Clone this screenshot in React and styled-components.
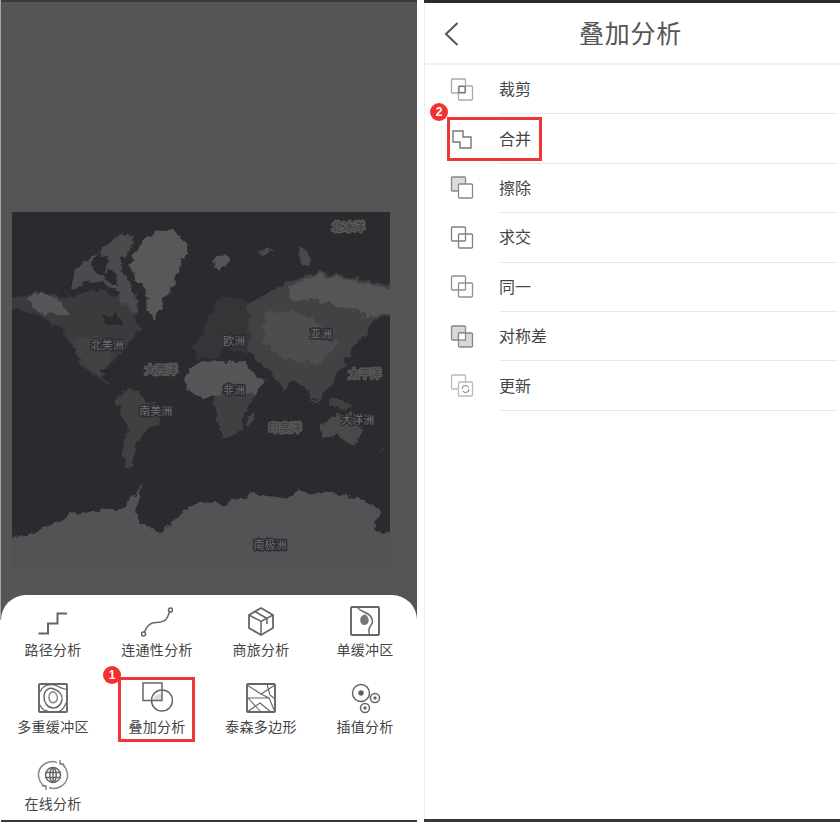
import React from "react";
import styled, { createGlobalStyle } from "styled-components";

const GlobalStyle = createGlobalStyle`
  html, body {
    margin: 0;
    padding: 0;
    background: #fff;
  }
  body {
    font-family: "Noto Sans CJK SC", "Liberation Sans", sans-serif;
  }
`;

const Page = styled.div`
  width: 840px;
  height: 822px;
  display: flex;
  gap: 7px;
  padding-left: 1px;
  box-sizing: border-box;
  overflow: hidden;
`;

const Phone = styled.div`
  width: 416px;
  height: 822px;
  flex: none;
  box-sizing: border-box;
  display: flex;
  flex-direction: column;
  background: #fff;
  border-bottom: ${(p) => p.$bar}px solid #36363a;
`;

const MapScreen = styled.div`
  flex: none;
  height: 620px;
  background: #555;
  border-top: 2px solid #39393c;
  box-shadow: -1px 0 0 #a5a5a5;
  padding: 210px 27px 0 11px;
  box-sizing: border-box;
  overflow: hidden;
`;

const MapSvg = styled.svg`
  display: block;
  width: 378px;
  height: 356px;
`;

const MapLabel = styled.text`
  font-size: 33px;
  text-anchor: middle;
  dominant-baseline: central;
  paint-order: stroke;
  stroke-width: 9px;
  stroke-linejoin: round;
  fill: ${(p) => (p.$ocean ? "#3c3c3e" : "#6f6f72")};
  stroke: ${(p) => (p.$ocean ? "#585858" : "#2c2c30")};
`;

const Sheet = styled.div`
  flex: 1;
  margin-top: -25px;
  position: relative;
  background: #fff;
  border-radius: 25px 25px 0 0;
  padding-top: 10px;
`;

const Grid = styled.div`
  display: grid;
  grid-template-columns: repeat(4, 104px);
  grid-auto-rows: 53px;
  row-gap: 24px;
`;

const Tool = styled.div`
  position: relative;
  display: flex;
  flex-direction: column;
  align-items: center;
  gap: 4px;
`;

const ToolIcon = styled.svg`
  display: block;
  width: 32px;
  height: 32px;
  fill: none;
  stroke: #666;
  stroke-width: 1.5;
`;

const ToolName = styled.span`
  font-size: 14px;
  line-height: 16px;
  letter-spacing: 0.3px;
  color: #444;
  white-space: nowrap;
`;

const Highlight = styled.div`
  position: absolute;
  box-sizing: border-box;
  border: 3px solid #f03636;
  left: ${(p) => p.$left}px;
  top: ${(p) => p.$top}px;
  width: ${(p) => p.$width}px;
  height: ${(p) => p.$height}px;
`;

const Badge = styled.div`
  position: absolute;
  left: ${(p) => p.$left}px;
  top: ${(p) => p.$top}px;
  width: 18px;
  height: 18px;
  border-radius: 50%;
  background: #f5302f;
  color: #fff;
  font-family: "Liberation Sans", sans-serif;
  font-size: 12px;
  font-weight: 700;
  line-height: 18px;
  text-align: center;
`;

const TopBar = styled.div`
  flex: none;
  height: 3px;
  background: #2b2b30;
`;

const Header = styled.div`
  height: 60px;
  padding-bottom: 2px;
  box-sizing: border-box;
  display: flex;
  align-items: center;
  justify-content: center;
  position: relative;
`;

const HeaderRule = styled.div`
  height: 2px;
  background: #efefef;
`;

const BackIcon = styled.svg`
  position: absolute;
  left: 18px;
  top: 18px;
  width: 18px;
  height: 26px;
  fill: none;
  stroke: #555;
  stroke-width: 2;
`;

const Title = styled.h1`
  margin: 0;
  font-size: 25px;
  font-weight: 400;
  letter-spacing: 0.8px;
  color: #555;
  padding-right: 4px;
`;

const ListScreen = styled.div`
  flex: 1;
  border-left: 1px solid #eee;
`;

const Row = styled.div`
  position: relative;
  height: 49.4px;
  display: flex;
  align-items: center;
  padding-left: 25px;
  margin-right: 2px;
`;

const RowIcon = styled.svg`
  width: 24px;
  height: 24px;
  flex: none;
  fill: none;
`;

const RowLabel = styled.div`
  margin-left: 25px;
  flex: 1;
  height: 100%;
  padding-bottom: 2px;
  display: flex;
  align-items: center;
  box-sizing: border-box;
  border-bottom: 1px solid #e9e9e9;
  font-size: 16px;
  color: #444;
`;

const Stairs = () => (
  <ToolIcon viewBox="0 0 32 32">
    <path d="M1.500 28.500H11V18.500H20.500V8.500H30" strokeWidth="2" />
  </ToolIcon>
);

const Route = () => (
  <ToolIcon viewBox="0 0 32 32">
    <circle cx="2.500" cy="29" r="2" />
    <circle cx="29.500" cy="5" r="2" />
    <path d="M3.500 27C6 20 10 17.500 15 17.500C21 17.500 25 16 26.500 12C27.500 9.500 28 8.500 28.500 7" />
  </ToolIcon>
);

const Box3d = () => (
  <ToolIcon viewBox="0 0 32 32">
    <path d="M16 3L28 10V23L16 30L4 23V10Z" strokeWidth="1.800" />
    <path d="M4 10L16 16.500L28 10M16 16.500V30M10 6.500L22 13.500V19" />
  </ToolIcon>
);

const SingleBuffer = () => (
  <ToolIcon viewBox="0 0 32 32">
    <rect x="2" y="2" width="28" height="28" rx="1" strokeWidth="1.900" />
    <path d="M9 3C11 7 18 6 22 12C26 18 21 20 20 24C19.500 26 20 28 20.500 29.500" />
    <path d="M12 12C14 10 16 8 18 11C21 15 20 19 16 20C12 21 10 15 12 12Z" fill="#777" stroke="none" />
  </ToolIcon>
);

const MultiBuffer = () => (
  <ToolIcon viewBox="0 0 32 32">
    <rect x="2" y="2" width="28" height="28" rx="1" strokeWidth="1.900" />
    <path d="M3 10C6 3 11 2 17 3C22 4 26 8 29 7M3 23C5 28 8 29 11 29M29 21C27 26 25 29 22 29" strokeWidth="1.200" />
    <path d="M7 15C7 8 12 5 17 7C22 9 26 13 25 18C24 22 21 26 16 26C11 26 7 21 7 15Z" />
    <path d="M12 15C12 11 15 9 17 10C20 12 21 15 20 18C19 21 15 21 14 20C12 19 12 17 12 15Z" stroke="#888" />
  </ToolIcon>
);

const Overlay = () => (
  <ToolIcon viewBox="0 0 32 32">
    <path d="M20 12H21V18.500H12.500V17C13 14 16 12 20 12Z" fill="#ddd" stroke="none" />
    <rect x="2" y="1" width="19" height="17.500" />
    <circle cx="21" cy="18.500" r="10.500" />
  </ToolIcon>
);

const Thiessen = () => (
  <ToolIcon viewBox="0 0 32 32">
    <rect x="2" y="2" width="28" height="28" rx="1" strokeWidth="1.900" />
    <path d="M2 3L16 12L30 3M16 12L24 16L30 30M3 16H24M3 16L16 30M2 30L15 21L26 30M22 2L25 13L30 17" strokeWidth="1.100" />
  </ToolIcon>
);

const Interpolate = () => (
  <ToolIcon viewBox="0 0 32 32">
    <circle cx="12" cy="11" r="8.500" />
    <circle cx="12" cy="11" r="2" fill="#555" />
    <circle cx="26" cy="16" r="4.500" />
    <circle cx="26" cy="16" r="1" fill="#555" />
    <circle cx="16" cy="26" r="4.500" />
    <circle cx="16" cy="26" r="1" fill="#555" />
  </ToolIcon>
);

const Online = () => (
  <ToolIcon viewBox="0 0 32 32">
    <circle cx="16" cy="16" r="7.500" />
    <ellipse cx="16" cy="16" rx="3.200" ry="7.500" />
    <path d="M8.500 13.500H23.500M8.500 18.500H23.500M16 8.500V23.500" />
    <path d="M20 3.500C13 0.500 3 5 1.500 14C1 20 4 26 9 28" stroke="#888" />
    <path d="M12 28.500C19 31.500 29 27 30.500 18C31 12 28 6 23 4" stroke="#888" />
    <path d="M23 1V5H27M9 31V27H5" stroke="#888" />
  </ToolIcon>
);

const tools = [
  { name: "路径分析", Icon: Stairs },
  { name: "连通性分析", Icon: Route },
  { name: "商旅分析", Icon: Box3d },
  { name: "单缓冲区", Icon: SingleBuffer },
  { name: "多重缓冲区", Icon: MultiBuffer },
  { name: "叠加分析", Icon: Overlay, mark: "1" },
  { name: "泰森多边形", Icon: Thiessen },
  { name: "插值分析", Icon: Interpolate },
  { name: "在线分析", Icon: Online },
];

// two overlapping squares, with what varies between the list icons
const Squares = ({ back = "none", front = "none", stroke = "#888", both, children }) => (
  <RowIcon viewBox="0 0 24 24">
    <rect x="1.500" y="1" width="14" height="14" rx="1" fill={back} stroke={stroke} strokeWidth="1.300" />
    <rect x="8.500" y="8" width="14" height="14" rx="1" fill={front} stroke={stroke} strokeWidth="1.300" />
    {both && <rect x="8.500" y="8" width="7" height="7" fill={both} stroke={stroke} strokeWidth="1.300" />}
    {children}
  </RowIcon>
);

const overlayRows = [
  {
    name: "裁剪",
    icon: (
      <Squares stroke="#aaa">
        <rect x="9" y="8.500" width="6" height="6" fill="#fff" stroke="#777" strokeWidth="1.200" />
      </Squares>
    ),
  },
  {
    name: "合并",
    mark: "2",
    icon: (
      <RowIcon viewBox="0 0 24 24">
        <path d="M3 4H13V10H21V21H10V15H3Z" stroke="#777" strokeWidth="1.400" />
      </RowIcon>
    ),
  },
  { name: "擦除", icon: <Squares back="#ddd" front="#fff" stroke="#888" /> },
  { name: "求交", icon: <Squares stroke="#808080" /> },
  { name: "同一", icon: <Squares stroke="#909090" /> },
  { name: "对称差", icon: <Squares back="#d8d8d8" front="#d8d8d8" both="#fff" /> },
  {
    name: "更新",
    icon: (
      <Squares stroke="#bbb" front="#fff">
        <circle cx="15.500" cy="15" r="3.500" fill="none" stroke="#777" strokeWidth="1" strokeDasharray="9 2" />
      </Squares>
    ),
  },
];

const mapLabels = [
  { text: "北冰洋", x: 1045, y: 77, ocean: true },
  { text: "北美洲", x: 322, y: 433 },
  { text: "大西洋", x: 483, y: 507, ocean: true },
  { text: "欧洲", x: 702, y: 420 },
  { text: "亚洲", x: 963, y: 398 },
  { text: "太平洋", x: 1094, y: 519, ocean: true },
  { text: "非洲", x: 702, y: 567 },
  { text: "南美洲", x: 467, y: 631 },
  { text: "大洋洲", x: 1073, y: 658 },
  { text: "印度洋", x: 855, y: 680, ocean: true },
  { text: "南极洲", x: 810, y: 1033 },
];

// path coordinates are 3x page pixels, taken from the reference crop
const WorldMap = () => (
  <MapSvg viewBox="36 36 1134 1068">
    <defs>
      <pattern id="seaDots" width="24" height="24" patternUnits="userSpaceOnUse">
        <rect x="6" y="6" width="3" height="3" fill="#313136" />
      </pattern>
      <filter id="coast" x="-5%" y="-5%" width="110%" height="110%">
        <feTurbulence type="fractalNoise" baseFrequency="0.035" numOctaves="4" seed="7" result="warp" />
        <feDisplacementMap in="SourceGraphic" in2="warp" scale="30" xChannelSelector="R" yChannelSelector="G" result="land" />
      </filter>
    </defs>
    <rect x="36" y="36" width="1134" height="1068" fill="#2a2a2f" />
    <rect x="36" y="36" width="1134" height="1068" fill="url(#seaDots)" />
    <g filter="url(#coast)">
      {/* Greenland and arctic islands */}
      <path fill="#585858" d="M385 190L420 130L470 95L520 88L560 135L545 190L530 230L500 290L465 358L448 340L435 260L400 225Z" />
      <path fill="#4c4c4e" d="M218 215L270 175L330 120L385 100L408 120L385 160L362 180L380 230L405 290L408 345L370 320L340 270L300 240L260 250L215 270Z" />
      <path fill="#2a2a2f" d="M300 150L330 190L310 220L345 215L360 260L330 240L290 215L270 195Z" />
      <path fill="#565658" d="M640 170L680 160L690 180L660 215L645 200Z" />
      <path fill="#484849" d="M780 150L810 145L815 155L790 165ZM895 145L910 145L935 195L905 195Z" />
      {/* North America */}
      <path fill="#3b3b3d" d="M20 300L90 285L130 280L210 290L300 270L360 300L405 345L425 395L400 410L370 450L335 490L305 530L345 572L320 552L270 520L230 470L210 420L160 370L110 345L60 325L20 325Z" />
      <path fill="#565658" d="M85 295L125 278L175 300L210 345L170 345L130 340L100 320Z" />
      <path fill="#434345" d="M215 430L290 400L340 430L330 490L300 530L260 500Z" />
      <path fill="#2a2a2f" d="M305 345L345 340L370 375L320 375ZM300 510L335 500L350 530L320 535Z" />
      {/* South America */}
      <path fill="#3f3f41" d="M350 600L380 565L420 575L470 630L482 660L430 700L402 760L395 810L375 800L368 750L380 690Z" />
      {/* Eurasia */}
      <path fill="#353537" d="M625 350L670 285L745 310L750 470L680 440L640 475L590 475L575 445L610 400Z" />
      <path fill="#434345" d="M745 310L820 270L900 230L960 220L1040 230L1190 260L1190 345L1120 360L1100 400L1060 440L1030 500L990 560L950 610L920 570L880 540L850 575L810 510L770 485L745 450Z" />
      <path fill="#555557" d="M860 260L960 225L1040 240L1190 270L1190 340L1100 345L1040 330L960 300L880 300Z" />
      <path fill="#4e4e50" d="M790 340L880 330L960 370L1010 440L950 490L860 480L790 430Z" />
      <path fill="#3f3f41" d="M1000 590L1040 610L1060 625L1020 630L990 610Z" />
      <path fill="#2a2a2f" d="M775 275L815 215L805 240L785 290ZM750 450L770 470L765 480L745 465Z" />
      {/* Africa, Australia, Madagascar */}
      <path fill="#565658" d="M552 530L590 490L660 480L740 490L775 540L800 538L770 580L690 570L640 590L590 590L555 560Z" />
      <path fill="#404042" d="M640 590L690 570L770 580L735 640L720 690L672 716L650 670Z" />
      <path fill="#48484a" d="M962 680L1010 640L1060 640L1087 690L1060 732L1000 710L965 712Z" />
      <path fill="#444446" d="M745 645L758 640L752 680L742 682Z" />
      <path fill="#38383a" d="M1135 760L1165 725L1150 755Z" />
      {/* Antarctica runs off the map into the backdrop */}
      <path fill="#525254" d="M-40 1008L90 1005L150 975L210 945L280 930L370 930L405 880L428 852L410 900L415 965L480 1002L540 945L600 905L680 912L760 880L830 898L900 875L1010 880L1090 900L1142 930L1125 995L1220 1005L1220 1180L-40 1180Z" />
    </g>
    {mapLabels.map((l) => (
      <MapLabel key={l.text} x={l.x} y={l.y} $ocean={l.ocean}>
        {l.text}
      </MapLabel>
    ))}
  </MapSvg>
);

export default function App() {
  return (
    <Page>
      <GlobalStyle />
      <Phone $bar={2}>
        <MapScreen>
          <WorldMap />
        </MapScreen>
        <Sheet>
          <Grid>
            {tools.map(({ name, Icon, mark }) => (
              <Tool key={name}>
                <Icon />
                <ToolName>{name}</ToolName>
                {mark && <Highlight $left={13} $top={-5} $width={77} $height={65} />}
                {mark && <Badge $left={-2} $top={-16}>{mark}</Badge>}
              </Tool>
            ))}
          </Grid>
        </Sheet>
      </Phone>
      <Phone $bar={3}>
        <TopBar />
        <ListScreen>
          <Header>
            <BackIcon viewBox="0 0 18 26">
              <path d="M14.500 2L3 13L14.500 24" />
            </BackIcon>
            <Title>叠加分析</Title>
          </Header>
          <HeaderRule />
          {overlayRows.map(({ name, icon, mark }) => (
            <Row key={name}>
              {icon}
              <RowLabel>{name}</RowLabel>
              {mark && <Highlight $left={22} $top={3} $width={95} $height={44} />}
              {mark && <Badge $left={5} $top={-11}>{mark}</Badge>}
            </Row>
          ))}
        </ListScreen>
      </Phone>
    </Page>
  );
}
